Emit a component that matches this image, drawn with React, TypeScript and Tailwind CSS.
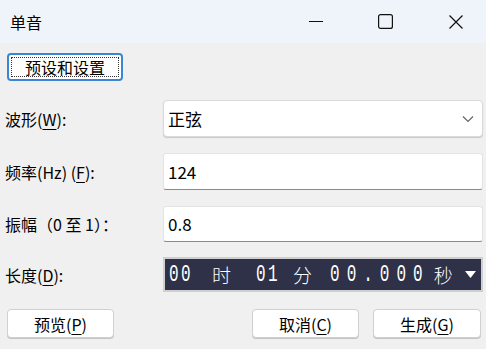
import React from 'react';

// 访问键加下划线
function Key({ k }: { k: string }) {
  return <span className="underline underline-offset-[3px] decoration-1">{k}</span>;
}

function Field({ label, children, top }: { label: React.ReactNode; children: React.ReactNode; top: string }) {
  return (
    <div className={`flex items-center ${top}`}>
      <div className="w-[163px] pl-[5px] text-[16px] text-black">{label}</div>
      {children}
    </div>
  );
}

function Button({ children, className = '' }: { children: React.ReactNode; className?: string }) {
  return (
    <button
      type="button"
      className={`h-[29px] rounded-[4px] border border-[#d0d0d0] bg-white text-[16px] text-black shadow-[0_1px_0_#c4c4c4] ${className}`}
    >
      {children}
    </button>
  );
}

export default function App() {
  return (
    <div className="w-[486px] h-[349px] overflow-hidden bg-[#f0f0f0] font-['Noto_Sans_CJK_SC','Noto_Sans',sans-serif] select-none">
      {/* 标题栏 */}
      <div className="h-[43px] bg-[#eef4f9] flex items-center pr-[23px]">
        <div className="pl-[10px] text-[16px] text-black flex-1">单音</div>
        <svg width="14" height="14" viewBox="0 0 14 14">
          <path d="M0 6.5h14" stroke="#111" strokeWidth="1" />
        </svg>
        <svg className="ml-[55px]" width="15" height="15" viewBox="0 0 15 15">
          <rect x="0.6" y="0.6" width="13.8" height="13.8" rx="2" fill="none" stroke="#111" strokeWidth="1.2" />
        </svg>
        <svg className="ml-[56px]" width="14" height="14" viewBox="0 0 14 14">
          <path d="M0.5 0.5l13 13M13.5 0.5l-13 13" stroke="#111" strokeWidth="1.2" />
        </svg>
      </div>

      {/* 预设按钮 */}
      <div className="pl-[7px] pt-[10px]">
        <button
          type="button"
          className="w-[116px] h-[28px] rounded-[4px] border-2 border-[#3a86d4] bg-white p-[2px] text-[16px] text-black"
        >
          <div className="w-full h-full border border-dotted border-[#333] flex items-center justify-center leading-none">
            预设和设置
          </div>
        </button>
      </div>

      <Field top="mt-[19px]" label={<>波形(<Key k="W" />):</>}>
        <div className="w-[320px] h-[37px] rounded-[4px] border border-[#d9d9d9] bg-white shadow-[0_1px_1px_#c8c8c8] flex items-center justify-between pl-[4px] pr-[8px]">
          <span className="text-[17px] text-black">正弦</span>
          <svg width="12" height="8" viewBox="0 0 12 8">
            <path d="M1 1.5l5 5 5-5" fill="none" stroke="#666" strokeWidth="1.2" />
          </svg>
        </div>
      </Field>

      <Field top="mt-[16px]" label={<>频率(Hz) (<Key k="F" />):</>}>
        <div className="w-[320px] h-[37px] rounded-[3px] border border-[#e3e3e3] border-b-[#8a8a8a] bg-white flex items-center pl-[4px] text-[17px] text-black">
          124
        </div>
      </Field>

      <Field top="mt-[16px]" label={<>振幅（0 至 1）：</>}>
        <div className="w-[320px] h-[36px] rounded-[3px] border border-[#e3e3e3] border-b-[#8a8a8a] bg-white flex items-center pl-[4px] text-[17px] text-black">
          0.8
        </div>
      </Field>

      <Field top="mt-[15px]" label={<>长度(<Key k="D" />):</>}>
        <div className="w-[320px] h-[35px] border-2 border-[#cfcfcf] bg-[#2e3147] flex items-center pl-[4px] text-white">
          <span className="font-['Liberation_Mono',monospace] text-[16px] tracking-[2.4px] inline-block scale-y-150">00</span>
          <span className="ml-[19px] text-[19px] font-light leading-none">时</span>
          <span className="ml-[25px] font-['Liberation_Mono',monospace] text-[16px] tracking-[2.4px] inline-block scale-y-150">01</span>
          <span className="ml-[13px] text-[19px] font-light leading-none">分</span>
          <span className="ml-[18px] font-['Liberation_Mono',monospace] text-[16px] tracking-[7px] inline-block scale-y-150">00.000</span>
          <span className="ml-[4px] text-[19px] font-light leading-none">秒</span>
          <svg className="ml-[12px]" width="11" height="7" viewBox="0 0 11 7">
            <path d="M0 0h11L5.5 7z" fill="#fff" />
          </svg>
        </div>
      </Field>

      {/* 底部按钮 */}
      <div className="mt-[17px] flex items-center px-[7px]">
        <Button className="w-[107px]">
          预览(<Key k="P" />)
        </Button>
        <div className="flex-1" />
        <Button className="w-[107px]">
          取消(<Key k="C" />)
        </Button>
        <Button className="w-[108px] ml-[14px] mr-[-2px]">
          生成(<Key k="G" />)
        </Button>
      </div>
    </div>
  );
}
